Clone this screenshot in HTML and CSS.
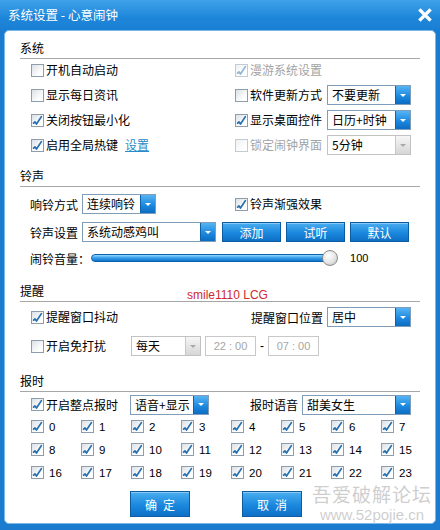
FILE: index.html
```html
<!DOCTYPE html>
<html lang="zh-CN">
<head>
    <meta charset="UTF-8">
    <title>系统设置 - 心意闹钟</title>
    <link rel="stylesheet" href="styles.css">
</head>
<body>
    <!-- 勾选标记 -->
    <svg class="defs" width="0" height="0">
        <symbol id="tick" viewBox="0 0 11 11">
            <path d="M1.6 8.2 L3 6.9 L4.5 9 L9.4 1.6" fill="none" stroke-width="1.7" stroke-linecap="round" stroke-linejoin="round"/>
        </symbol>
    </svg>

    <div class="window">
        <div class="titlebar">
            <span class="title">系统设置 - 心意闹钟</span>
            <svg class="close" width="16" height="16" viewBox="0 0 16 16"><path d="M3 3L13 13M13 3L3 13"/></svg>
        </div>

        <div class="panel">
            <!-- 系统 -->
            <div class="sec-title">系统</div>
            <div class="grid2 sys">
                <label class="chk"><span class="cb"></span>开机自动启动</label>
                <label class="chk dis"><span class="cb"><svg><use href="#tick"/></svg></span>漫游系统设置</label>

                <label class="chk"><span class="cb"></span>显示每日资讯</label>
                <div class="chk">
                    <span class="cb"></span><span class="lbl w77">软件更新方式</span>
                    <span class="sel w84"><span class="val">不要更新</span><span class="arr"></span></span>
                </div>

                <label class="chk"><span class="cb"><svg><use href="#tick"/></svg></span>关闭按钮最小化</label>
                <div class="chk">
                    <span class="cb"><svg><use href="#tick"/></svg></span><span class="lbl w77">显示桌面控件</span>
                    <span class="sel w84"><span class="val">日历+时钟</span><span class="arr"></span></span>
                </div>

                <label class="chk"><span class="cb"><svg><use href="#tick"/></svg></span>启用全局热键<a class="link">设置</a></label>
                <div class="chk dis">
                    <span class="cb"></span><span class="lbl w77">锁定闹钟界面</span>
                    <span class="sel w84 off"><span class="val">5分钟</span><span class="arr"></span></span>
                </div>
            </div>

            <!-- 铃声 -->
            <div class="sec-title ring">铃声</div>
            <div class="ring-body">
                <div class="row">
                    <div class="left">
                        <span class="lbl w52">响铃方式</span>
                        <span class="sel w74"><span class="val">连续响铃</span><span class="arr"></span></span>
                    </div>
                    <label class="chk"><span class="cb"><svg><use href="#tick"/></svg></span>铃声渐强效果</label>
                </div>
                <div class="row">
                    <span class="lbl w52">铃声设置</span>
                    <span class="sel w134"><span class="val">系统动感鸡叫</span><span class="arr"></span></span>
                    <span class="btn">添加</span>
                    <span class="btn">试听</span>
                    <span class="btn">默认</span>
                </div>
                <div class="row vol">
                    <span class="lbl">闹铃音量：</span>
                    <div class="track"><span class="fill"></span><span class="thumb"></span></div>
                    <span class="num">100</span>
                </div>
            </div>

            <!-- 提醒 -->
            <div class="sec-title remind">提醒<span class="mark">smile1110 LCG</span></div>
            <div class="grid2 remind-body">
                <label class="chk"><span class="cb"><svg><use href="#tick"/></svg></span>提醒窗口抖动</label>
                <div class="right">
                    <span class="lbl">提醒窗口位置</span>
                    <span class="sel w84"><span class="val">居中</span><span class="arr"></span></span>
                </div>
                <div class="chk span2">
                    <span class="cb"></span><span class="lbl w85">开启免打扰</span>
                    <span class="sel w70 off"><span class="val">每天</span><span class="arr"></span></span>
                    <span class="time">22 : 00</span>
                    <span class="dash">-</span>
                    <span class="time">07 : 00</span>
                </div>
            </div>

            <!-- 报时 -->
            <div class="sec-title chime">报时</div>
            <div class="grid2 chime-body">
                <div class="chk">
                    <span class="cb"><svg><use href="#tick"/></svg></span><span class="lbl w84">开启整点报时</span>
                    <span class="sel w79"><span class="val">语音+显示</span><span class="arr"></span></span>
                </div>
                <div class="right">
                    <span class="lbl">报时语音</span>
                    <span class="sel w109"><span class="val">甜美女生</span><span class="arr"></span></span>
                </div>
            </div>
            <div class="hours" id="hours"></div>

            <div class="actions">
                <span class="btn big">确定</span>
                <span class="btn big">取消</span>
            </div>
        </div>

        <div class="watermark">
            <span class="wm-cn">吾爱破解论坛</span>
            <span class="wm-en">www.52pojie.cn</span>
        </div>
    </div>

    <script>
        // 0-23 点整点报时勾选
        const hours = document.getElementById('hours');
        for (let h = 0; h < 24; h++) {
            const item = document.createElement('label');
            item.className = 'hour';
            item.innerHTML = '<span class="cb"><svg><use href="#tick"/></svg></span><span class="hnum">' + h + '</span>';
            hours.appendChild(item);
        }
    </script>
</body>
</html>
```

FILE: styles.css
```css
* {
    box-sizing: border-box;
}
body {
    margin: 0;
    font-family: "Noto Sans CJK SC", sans-serif;
    font-size: 12px;
    color: #000;
}
.defs {
    position: absolute;
}
.window {
    position: relative;
    width: 440px;
    height: 530px;
    background: #1a7bcf;
    overflow: hidden;
}
.titlebar {
    height: 30px;
    display: flex;
    align-items: center;
    justify-content: space-between;
    padding: 0 6px 0 8px;
    background: linear-gradient(#3fa2ea, #1e86d9 60%, #1a7fd3);
    color: #fff;
}
.title {
    font-size: 12.5px;
    line-height: 16px;
}
.close {
    width: 18px;
    height: 18px;
}
.close path {
    stroke: #fff;
    stroke-width: 3;
}
.panel {
    margin: 0 4px;
    height: 494px;
    background: #fff;
    border: 1px solid #7ab8e8;
    border-radius: 5px;
    padding: 9px 15px 0;
}

/* 分组标题 */
.sec-title {
    display: flex;
    align-items: flex-end;
    line-height: 16px;
    padding-bottom: 2px;
    border-bottom: 1px solid #a6a6a6;
}
.ring { margin-top: 12px; }
.remind { margin-top: 15px; }
.chime { margin-top: 16px; }
.mark {
    margin-left: 143px;
    margin-bottom: -3px;
    font-family: "Liberation Sans", sans-serif;
    font-size: 12px;
    line-height: 14px;
    color: #cc2b2b;
}

/* 复选框 */
.chk {
    display: flex;
    align-items: center;
    white-space: nowrap;
    line-height: 16px;
}
.cb {
    flex: none;
    display: flex;
    width: 13px;
    height: 13px;
    margin-right: 2px;
    border: 1px solid #8e9dab;
    background: linear-gradient(135deg, #dce1e6, #fff 75%);
}
.cb svg {
    width: 11px;
    height: 11px;
    stroke: #2570b0;
}
.dis {
    color: #a3a3a3;
}
.dis .cb {
    border-color: #c4ccd3;
    background: linear-gradient(135deg, #eef0f2, #fff 75%);
}
.dis .cb svg {
    stroke: #8fb6d4;
}
.dis .lbl {
    color: #a3a3a3;
}
.link {
    margin-left: 7px;
    color: #2a8bc9;
    text-decoration: underline;
}

.lbl { flex: none; }
.w52 { width: 52px; }
.w77 { width: 77px; }
.w84 { width: 84px; }
.w85 { width: 85px; }

/* 下拉框 */
.sel {
    flex: none;
    display: flex;
    height: 20px;
    border: 1px solid #7f9db9;
    background: #fff;
    color: #000;
}
.sel.w70 { width: 70px; }
.sel.w74 { width: 74px; }
.sel.w79 { width: 79px; }
.sel.w84 { width: 84px; }
.sel.w109 { width: 109px; }
.sel.w134 { width: 134px; }
.sel .val {
    flex: 1;
    padding-left: 4px;
    line-height: 18px;
    overflow: hidden;
}
.sel .arr {
    width: 15px;
    display: flex;
    align-items: center;
    justify-content: center;
    background: linear-gradient(#56b4f2, #1d8ae0 55%, #0b6cc2);
    border-left: 1px solid #0e62aa;
}
.sel .arr::after {
    content: "";
    border-left: 3px solid transparent;
    border-right: 3px solid transparent;
    border-top: 3px solid #fff;
}
.sel.off {
    border-color: #c2c2c2;
}
.sel.off .arr {
    background: linear-gradient(#f6f6f6, #d6d6d6);
    border-left-color: #c8c8c8;
}
.sel.off .arr::after {
    border-top-color: #a8a8a8;
}

/* 两栏布局 */
.grid2 {
    display: grid;
    grid-template-columns: 204px 176px;
    padding-left: 11px;
}
.sys {
    grid-auto-rows: 22px;
    row-gap: 3px;
}
.right {
    display: flex;
    align-items: center;
    justify-content: flex-end;
    gap: 4px;
    white-space: nowrap;
}
.span2 {
    grid-column: span 2;
}

/* 铃声 */
.ring-body {
    padding-left: 10px;
    margin-top: 6px;
}
.row {
    display: flex;
    align-items: center;
    height: 22px;
    white-space: nowrap;
}
.row + .row {
    margin-top: 6px;
}
.row .left {
    width: 205px;
    display: flex;
    align-items: center;
}
.btn {
    flex: none;
    width: 59px;
    height: 20px;
    margin-right: 5px;
    display: flex;
    align-items: center;
    justify-content: center;
    color: #fff;
    background: linear-gradient(#4aaef0, #1a88de 55%, #0d70c6);
    border: 1px solid #0c5c9f;
    box-shadow: inset 0 1px 0 rgba(255, 255, 255, 0.35);
}
.w134 + .btn {
    margin-left: 6px;
}
.row.vol {
    height: 20px;
    margin-top: 5px;
}
.track {
    position: relative;
    width: 247px;
    height: 16px;
    margin-left: 1px;
    display: flex;
    align-items: center;
}
.fill {
    width: 240px;
    height: 8px;
    border: 1px solid #0c63b0;
    border-radius: 4px;
    background: linear-gradient(#9ad6ff, #3aa2ec 45%, #0f72c8);
}
.thumb {
    position: absolute;
    right: 0;
    top: 0;
    width: 16px;
    height: 16px;
    border-radius: 50%;
    border: 1px solid #8c8c8c;
    background: radial-gradient(circle at 40% 35%, #fff, #e4e4e4 55%, #b8b8b8);
}
.num {
    margin-left: 12px;
    font-family: "Liberation Sans", sans-serif;
    font-size: 11px;
}

/* 提醒 */
.remind-body {
    margin-top: 4px;
    grid-auto-rows: 22px;
    row-gap: 7px;
}
.time {
    width: 51px;
    height: 20px;
    margin-left: 4px;
    border: 1px solid #c8c8c8;
    color: #a6a6a6;
    font-family: "Liberation Sans", sans-serif;
    font-size: 11px;
    line-height: 18px;
    text-align: center;
}
.dash {
    margin: 0 0 0 4px;
    font-family: "Liberation Sans", sans-serif;
}

/* 报时 */
.chime-body {
    margin-top: 2px;
    grid-auto-rows: 21px;
}
.hours {
    display: grid;
    grid-template-columns: repeat(8, 50px);
    grid-auto-rows: 23px;
    padding-left: 11px;
}
.hour {
    display: flex;
    align-items: center;
}
.hour .cb {
    margin-right: 5px;
}
.hnum {
    font-family: "Liberation Sans", sans-serif;
    font-size: 11.5px;
}

/* 确定 / 取消 */
.actions {
    display: flex;
    gap: 52px;
    margin-top: 7px;
    padding-left: 110px;
}
.btn.big {
    width: 60px;
    height: 26px;
    margin: 0;
    font-size: 12px;
    letter-spacing: 6px;
    text-indent: 6px;
}

.watermark {
    position: absolute;
    right: 8px;
    bottom: 8px;
    display: flex;
    flex-direction: column;
    align-items: center;
    gap: 3px;
    color: rgba(190, 190, 190, 0.75);
    text-shadow: 0 0 2px #fff;
    pointer-events: none;
}
.wm-cn {
    font-size: 19px;
    line-height: 20px;
    letter-spacing: 1px;
}
.wm-en {
    font-family: "Liberation Sans", sans-serif;
    font-size: 15px;
    line-height: 15px;
}
```
